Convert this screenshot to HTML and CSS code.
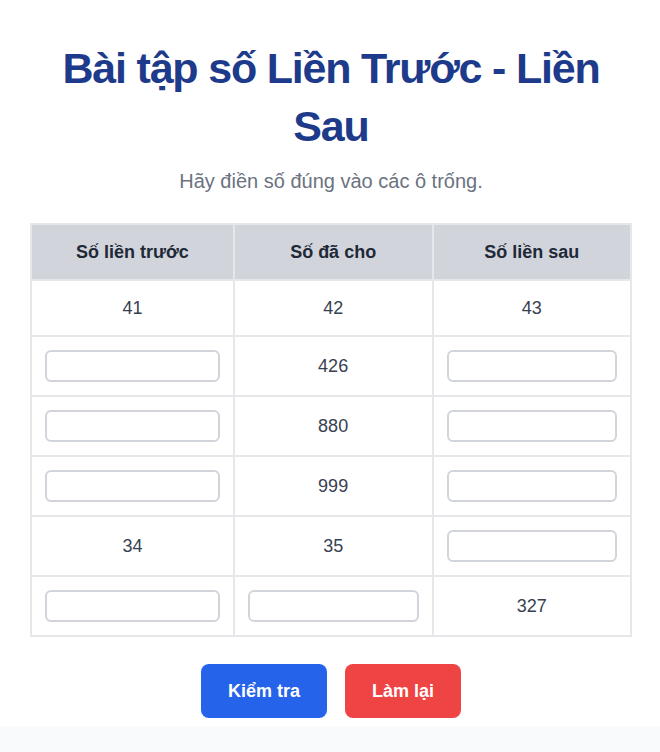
FILE: index.html
```html
<!DOCTYPE html>
<html lang="vi">
<head>
<meta charset="utf-8">
<link rel="stylesheet" href="styles.css">
</head>
<body>
<div class="card">
  <h1 class="title">Bài tập số Liền Trước - Liền Sau</h1>
  <p class="subtitle">Hãy điền số đúng vào các ô trống.</p>
  <table class="grid">
    <thead>
      <tr><th>Số liền trước</th><th>Số đã cho</th><th>Số liền sau</th></tr>
    </thead>
    <tbody>
      <tr class="text-row"><td>41</td><td>42</td><td>43</td></tr>
      <tr><td><input class="box" type="text"></td><td>426</td><td><input class="box" type="text"></td></tr>
      <tr><td><input class="box" type="text"></td><td>880</td><td><input class="box" type="text"></td></tr>
      <tr><td><input class="box" type="text"></td><td>999</td><td><input class="box" type="text"></td></tr>
      <tr><td>34</td><td>35</td><td><input class="box" type="text"></td></tr>
      <tr><td><input class="box" type="text"></td><td><input class="box" type="text"></td><td>327</td></tr>
    </tbody>
  </table>
  <div class="actions">
    <button class="btn btn-check">Kiểm tra</button>
    <button class="btn btn-reset">Làm lại</button>
  </div>
</div>
</body>
</html>
```
FILE: styles.css
```css
html, body {
  margin: 0;
  padding: 0;
}
body {
  background: #f8fafc;
  font-family: "Liberation Sans", Arial, sans-serif;
  color: #374151;
}
.card {
  background: #ffffff;
  padding: 39px 28px 8px 30px;
}
.title {
  margin: 0;
  text-align: center;
  color: #1e3a8a;
  font-size: 43px;
  letter-spacing: -1.2px;
  line-height: 58px;
  font-weight: 700;
}
.subtitle {
  margin: 12px 0 28px;
  text-align: center;
  color: #6b7280;
  font-size: 20px;
  line-height: 28px;
}
.grid {
  width: 100%;
  border-collapse: collapse;
  border: 2px solid #e5e7eb;
}
.grid th, .grid td {
  border: 2px solid #e5e7eb;
  text-align: center;
}
.grid th {
  background: #d1d5db;
  color: #1f2937;
  font-size: 18px;
  font-weight: 700;
  height: 54px;
  padding: 0 13px;
}
.grid td {
  font-size: 18px;
  color: #374151;
  height: 58px;
  padding: 0 13px;
}
.grid .text-row td {
  height: 54px;
}
.box {
  display: block;
  box-sizing: border-box;
  width: 100%;
  height: 32px;
  border: 2px solid #d1d5db;
  border-radius: 6px;
  background: #ffffff;
  font-family: inherit;
  font-size: 16px;
}
.actions {
  display: flex;
  justify-content: center;
  gap: 18px;
  margin-top: 27px;
}
.btn {
  border: none;
  border-radius: 8px;
  color: #ffffff;
  font-family: inherit;
  font-size: 18px;
  font-weight: 700;
  height: 54px;
  padding: 0 27px;
}
.btn-check {
  background: #2563eb;
}
.btn-reset {
  background: #ef4444;
}
```
